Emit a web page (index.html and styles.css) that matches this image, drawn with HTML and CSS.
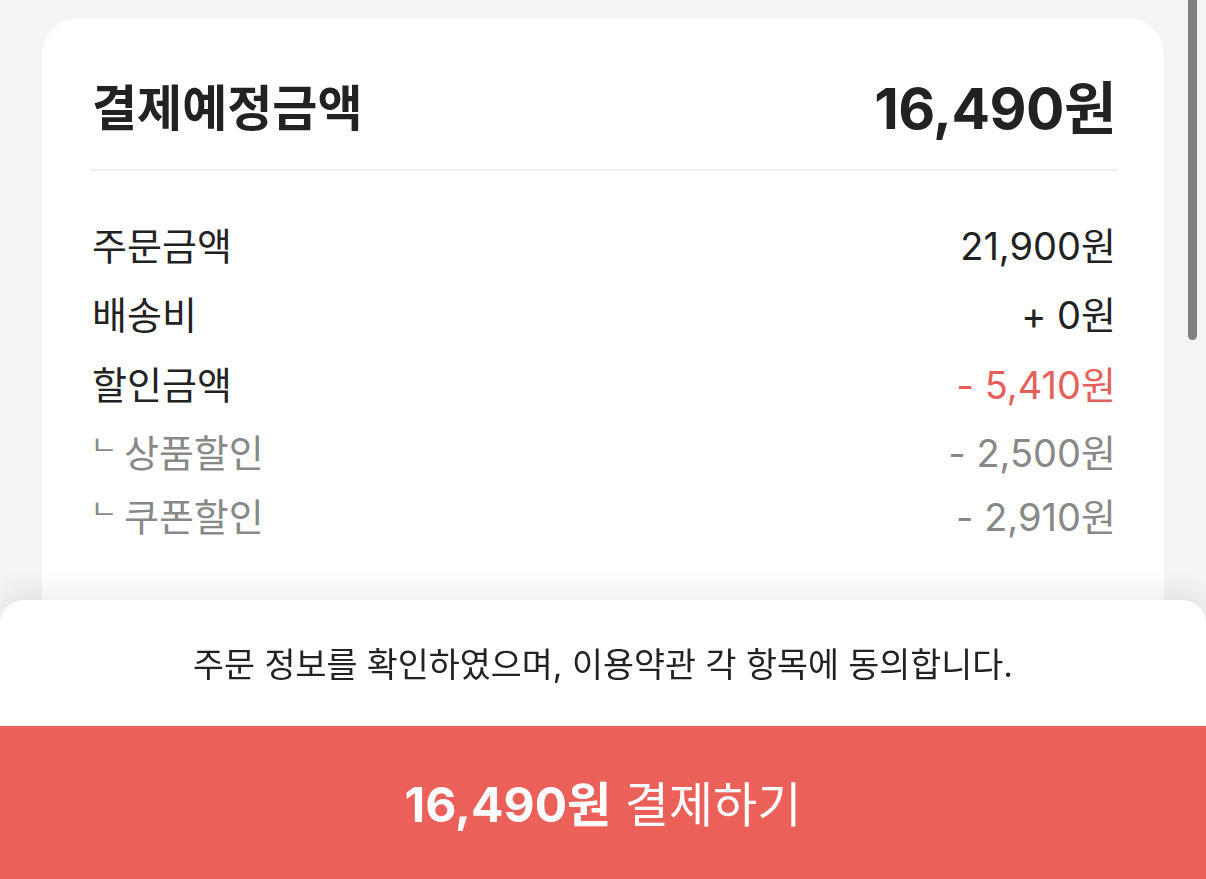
FILE: index.html
```html
<!DOCTYPE html>
<html lang="ko">
<head>
<meta charset="utf-8">
<link rel="stylesheet" href="styles.css">
</head>
<body>
<main class="page">
  <section class="card">
    <header class="card-head">
      <h1 class="head-title">결제예정금액</h1>
      <div class="head-amount">16,490원</div>
    </header>
    <ul class="rows">
      <li class="row"><span>주문금액</span><span>21,900원</span></li>
      <li class="row"><span>배송비</span><span>+ 0원</span></li>
      <li class="row mid"><span>할인금액</span><span class="red">- 5,410원</span></li>
      <li class="row sub"><span><span class="corner">ㄴ</span>상품할인</span><span>- 2,500원</span></li>
      <li class="row sub"><span><span class="corner">ㄴ</span>쿠폰할인</span><span>- 2,910원</span></li>
    </ul>
  </section>
</main>
<div class="sheet">
  <p class="notice">주문 정보를 확인하였으며, 이용약관 각 항목에 동의합니다.</p>
  <button class="pay"><b>16,490원</b> 결제하기</button>
</div>
<div class="scrollbar"></div>
</body>
</html>
```
FILE: styles.css
```css
* { box-sizing: border-box; }
html, body { margin: 0; padding: 0; }
body {
  background: #f4f4f4;
  font-family: Inter, "Noto Sans CJK KR", sans-serif;
  color: #222;
  height: 879px;
  overflow: hidden;
}
.page { padding: 18px 42px 0 42px; }
.card {
  background: #fff;
  border-radius: 36px;
  padding: 0 48px 80px 50px;
  height: 640px;
}
.card-head {
  display: flex;
  justify-content: space-between;
  align-items: center;
  height: 153px;
  border-bottom: 2px solid #efefef;
  padding-top: 30px;
  margin: 0 -2px;
  padding-left: 2px;
  padding-right: 2px;
}
.head-title {
  margin: 0;
  font-size: 49px;
  font-weight: 700;
  letter-spacing: 0;
  color: #222;
  line-height: 1;
}
.head-amount {
  font-size: 57px;
  font-weight: 700;
  color: #222;
  letter-spacing: -0.5px;
  line-height: 1;
}
.rows {
  list-style: none;
  margin: 0;
  padding: 38px 0 0;
}
.row {
  display: flex;
  justify-content: space-between;
  align-items: center;
  height: 69px;
  font-size: 38px;
  color: #222;
}
.row.mid { height: 71px; }
.row.sub { color: #888888; height: 64px; }
.red { color: #e5605a; }
.corner {
  display: inline-block;
  font-size: 26px;
  margin-right: 8px;
  position: relative;
  top: -12px;
  transform: scaleX(1.15);
}
.sheet {
  position: fixed;
  left: 0; right: 0; bottom: 0;
  height: 279px;
  background: #fff;
  border-radius: 24px 24px 0 0;
  box-shadow: 0 -10px 26px rgba(0,0,0,0.07);
  display: flex;
  flex-direction: column;
}
.notice {
  margin: 0;
  height: 126px;
  display: flex;
  align-items: center;
  justify-content: center;
  font-size: 33.7px;
  color: #222;
  padding-bottom: 2px;
}
.pay {
  flex: 1;
  border: 0;
  background: #ec605a;
  color: #fff;
  font-family: Inter, "Noto Sans CJK KR", sans-serif;
  font-size: 48px;
  font-weight: 400;
  padding: 0 0 4px;
}
.pay b { font-weight: 700; }
.scrollbar {
  position: fixed;
  right: 9px;
  top: -10px;
  width: 9px;
  height: 350px;
  border-radius: 5px;
  background: #7f7f7f;
}
```
